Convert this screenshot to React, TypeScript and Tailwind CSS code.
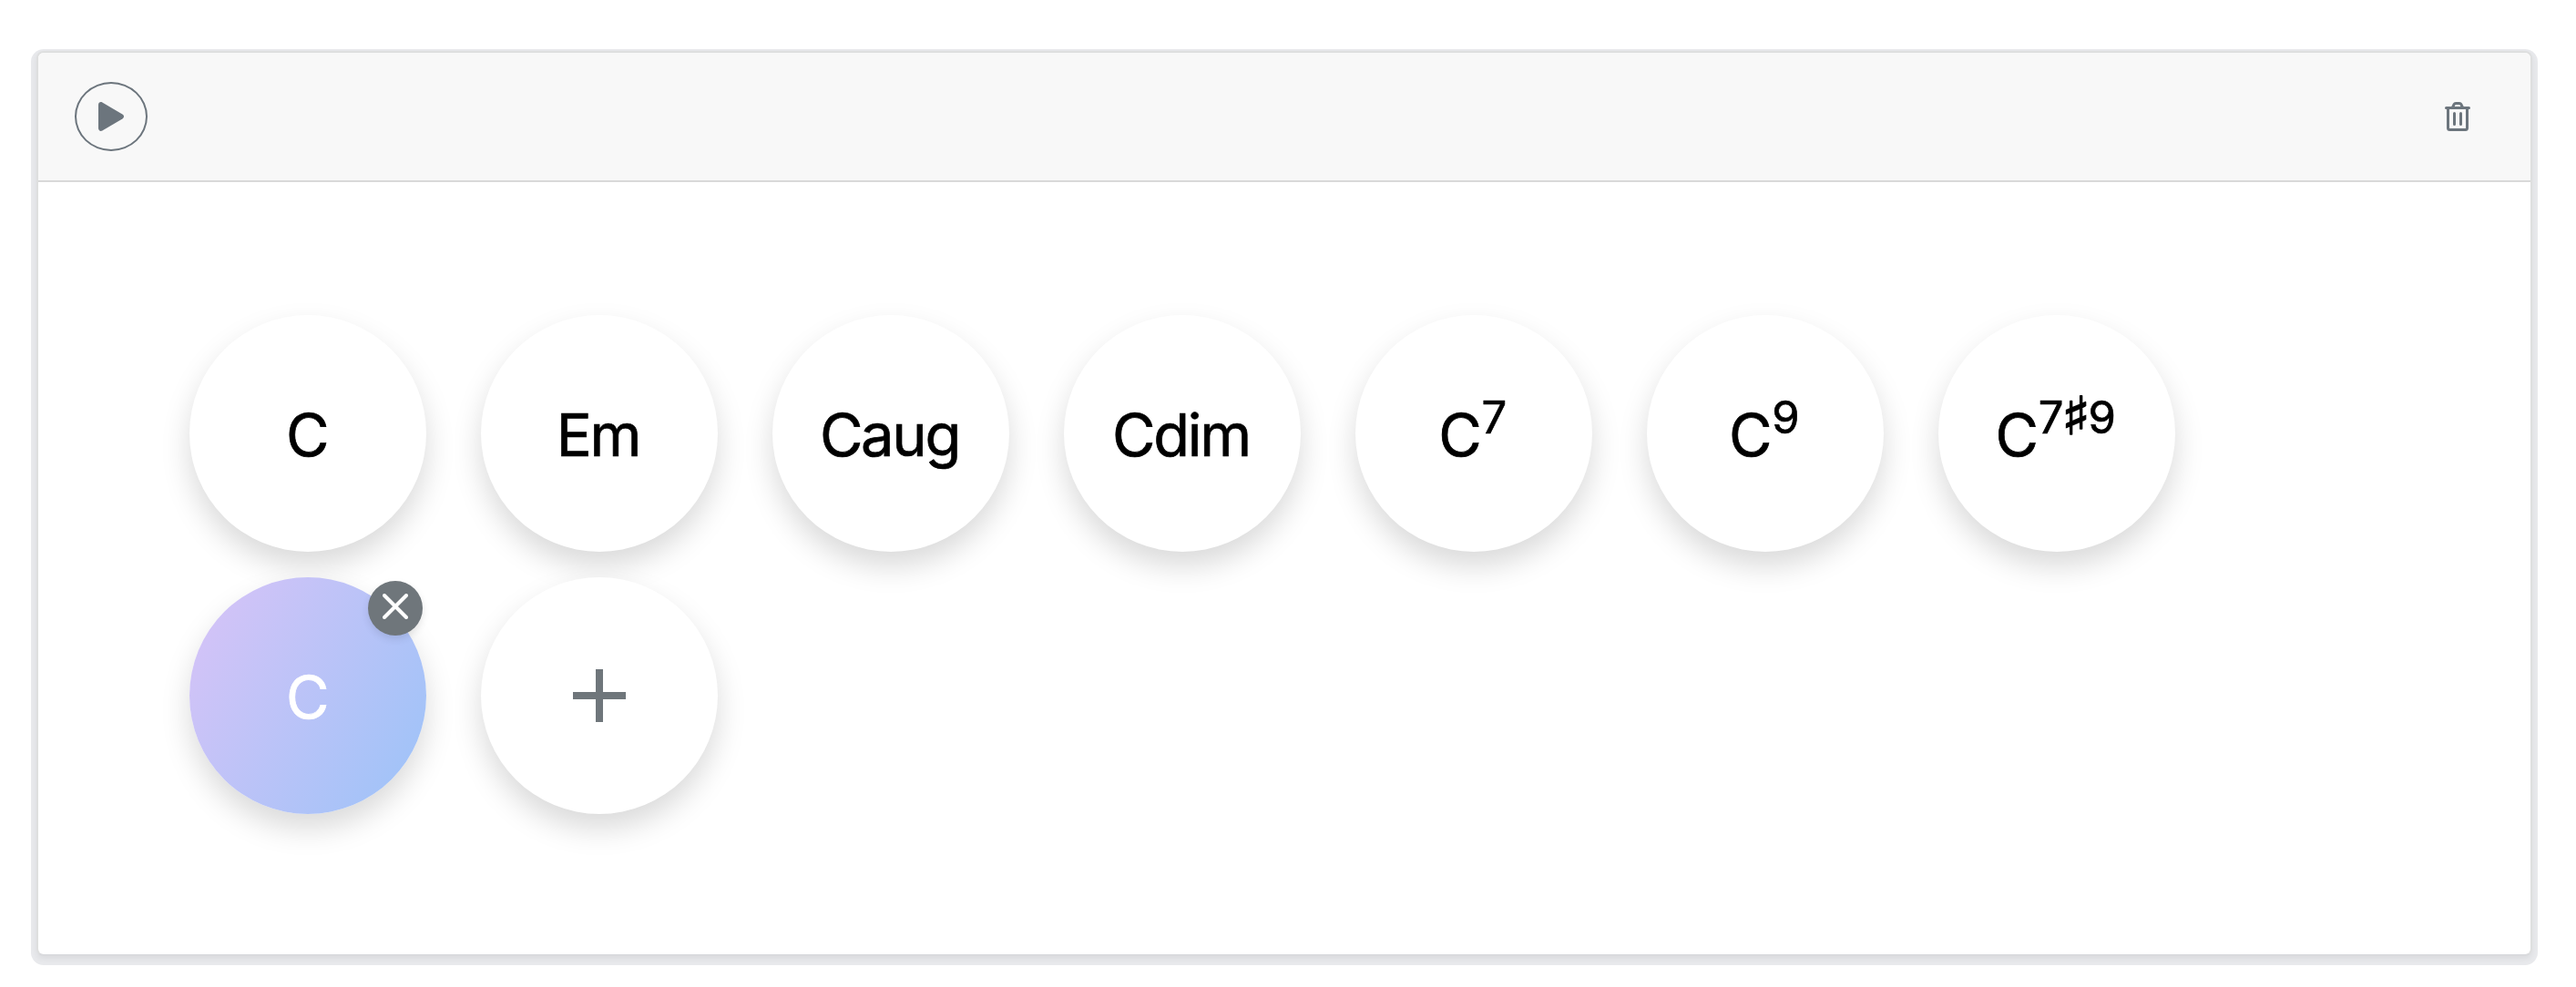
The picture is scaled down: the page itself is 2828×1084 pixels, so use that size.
import React from "react";

type Chord = { root: string; sup?: React.ReactNode };

const chords: Chord[] = [
  { root: "C" },
  { root: "Em" },
  { root: "Caug" },
  { root: "Cdim" },
  { root: "C", sup: "7" },
  { root: "C", sup: "9" },
  {
    root: "C",
    sup: (
      <>
        7
        <span className="relative top-px inline-block scale-x-[1.15] font-['DejaVu_Sans'] text-[58px] leading-none [-webkit-text-stroke:1.4px_currentColor]">
          ♯
        </span>
        9
      </>
    ),
  },
];

const disc =
  "relative flex h-[260px] w-[260px] shrink-0 items-center justify-center rounded-full shadow-[0_16px_32px_rgba(0,0,0,0.15)]";

function Label({ root, sup }: Chord) {
  return (
    <span className="whitespace-nowrap pr-[3px] pt-[2px] text-[65px] leading-none tracking-[-0.035em] [-webkit-text-stroke:0.7px_currentColor]">
      {root}
      {sup && <sup className="ml-[2px] text-[49px] leading-none tracking-[-0.01em]">{sup}</sup>}
    </span>
  );
}

export default function App() {
  return (
    <div className="h-[1084px] w-full bg-white pl-10 pr-12 pt-14 font-['Inter',sans-serif] text-black">
      <section className="flex h-[994px] flex-col overflow-hidden rounded-lg border-2 border-[#dedfdf] border-b-[#d9dadd] bg-white shadow-[0_3px_6px_rgba(0,0,0,0.06),0_4px_0_6px_#e8e9ec]">
        <header className="flex h-[142px] shrink-0 items-center justify-between border-b-2 border-[#d9d9d9] bg-[#f8f8f8] pl-10 pr-[66px]">
          <button
            aria-label="Play"
            className="flex h-[76px] w-20 items-center justify-center rounded-[50%] border-2 border-[#6c757d] text-[#6c757d]"
          >
            <svg width="28" height="32" viewBox="0 0 28 32" fill="currentColor">
              <path d="M0 3.2C0 .7 2.2-.6 4.3.5L26.4 13.6C28.5 14.9 28.5 17.1 26.4 18.4L4.3 31.5C2.2 32.6 0 31.3 0 28.8Z" />
            </svg>
          </button>
          <button aria-label="Delete" className="text-[#6c757d]">
            <svg
              width="28"
              height="32"
              viewBox="0 0 28 32"
              fill="none"
              stroke="currentColor"
              strokeWidth="3"
              strokeLinecap="round"
              strokeLinejoin="round"
            >
              <path d="M1.500 6.500H26.500M3.500 6.500V28.500a2 2 0 0 0 2 2H22.500a2 2 0 0 0 2-2V6.500M8.500 6L10 2.800Q10.700 1.500 12 1.500H16Q17.300 1.500 18 2.800L19.500 6M10.500 12.500V24.500M17.500 12.500V24.500" />
            </svg>
          </button>
        </header>
        <main className="flex flex-wrap content-start gap-x-[60px] gap-y-7 pl-[166px] pr-[200px] pt-[146px]">
          {chords.map((chord, i) => (
            <div key={i} className={`${disc} bg-white`}>
              <Label {...chord} />
            </div>
          ))}
          <div className={`${disc} bg-linear-[120deg] from-[#d9c3f7] to-[#9bc3f8] text-white`}>
            <Label root="C" />
            <button
              aria-label="Remove"
              className="absolute right-1 top-1 flex h-15 w-15 items-center justify-center rounded-full bg-[#6f767b] pb-1 text-white shadow-[0_4px_8px_rgba(0,0,0,0.1)]"
            >
              <svg width="28" height="28" viewBox="0 0 28 28" stroke="currentColor" strokeWidth="4" strokeLinecap="round">
                <path d="M2 2L26 26M26 2L2 26" />
              </svg>
            </button>
          </div>
          <button aria-label="Add chord" className={`${disc} bg-white text-[#6f767b]`}>
            <svg width="58" height="58" viewBox="0 0 58 58" stroke="currentColor" strokeWidth="8">
              <path d="M29 0V58M0 29H58" />
            </svg>
          </button>
        </main>
      </section>
    </div>
  );
}
